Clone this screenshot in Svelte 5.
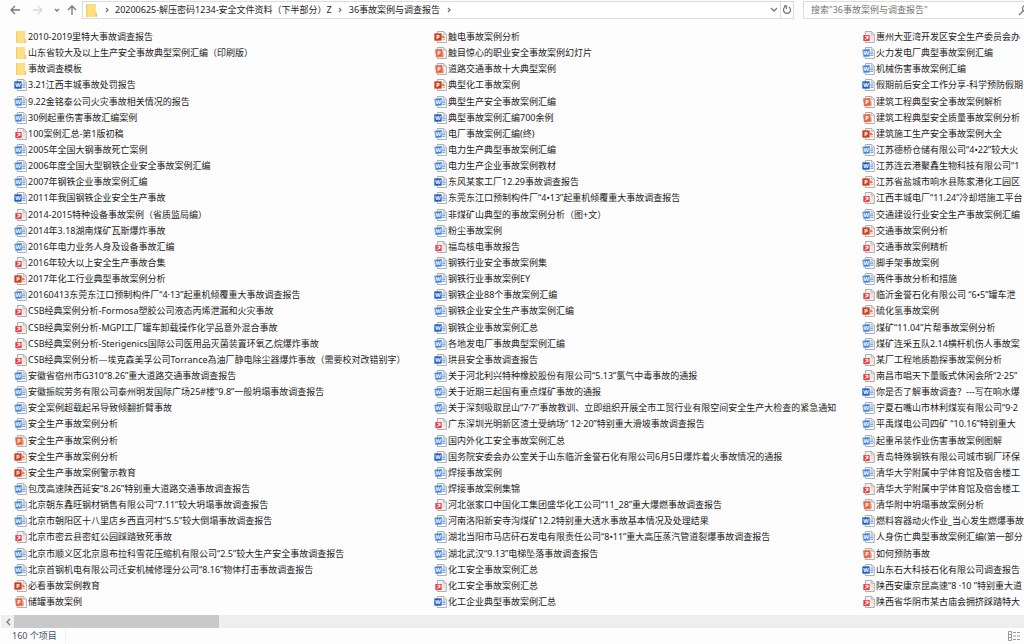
<script>
    let search = '';
    let selected = null;

    const path = ['20200625-解压密码1234-安全文件资料（下半部分）Z', '36事故案例与调查报告'];

    // [icono, nombre], de arriba a abajo y de columna en columna
    const files = [
        ['folder', '2010-2019里特大事故调查报告'],
        ['folder', '山东省较大及以上生产安全事故典型案例汇编（印刷版）'],
        ['folder', '事故调查模板'],
        ['docx', '3.21江西丰城事故处罚报告'],
        ['doc', '9.22金铭泰公司火灾事故相关情况的报告'],
        ['doc', '30例起重伤害事故汇编案例'],
        ['pdf', '100案例汇总-第1版初稿'],
        ['doc', '2005年全国大钢事故死亡案例'],
        ['doc', '2006年度全国大型钢铁企业安全事故案例汇编'],
        ['doc', '2007年钢铁企业事故案例汇编'],
        ['docx', '2011年我国钢铁企业安全生产事故'],
        ['pdf', '2014-2015特种设备事故案例（省质监局编）'],
        ['doc', '2014年3.18湖南煤矿瓦斯爆炸事故'],
        ['doc', '2016年电力业务人身及设备事故汇编'],
        ['pdf', '2016年较大以上安全生产事故合集'],
        ['pptx', '2017年化工行业典型事故案例分析'],
        ['doc', '20160413东莞东江口预制构件厂“4·13”起重机倾覆重大事故调查报告'],
        ['pdf', 'CSB经典案例分析-Formosa塑胶公司液态丙烯泄漏和火灾事故'],
        ['pdf', 'CSB经典案例分析-MGPI工厂罐车卸载操作化学品意外混合事故'],
        ['pdf', 'CSB经典案例分析-Sterigenics国际公司医用品灭菌装置环氧乙烷爆炸事故'],
        ['pdf', 'CSB经典案例分析—埃克森美孚公司Torrance為油厂静电除尘器爆炸事故（需要校对改错别字）'],
        ['doc', '安徽省宿州市G310“8.26”重大道路交通事故调查报告'],
        ['doc', '安徽振皖劳务有限公司泰州明发国际广场25#楼“9.8”一般坍塌事故调查报告'],
        ['doc', '安全案例超载起吊导致倾翻折臂事故'],
        ['doc', '安全生产事故案例分析'],
        ['ppt', '安全生产事故案例分析'],
        ['pptx', '安全生产事故案例分析'],
        ['pptx', '安全生产事故案例警示教育'],
        ['doc', '包茂高速陕西延安“8.26”特别重大道路交通事故调查报告'],
        ['doc', '北京朝东鑫旺钢材销售有限公司“7.11”较大坍塌事故调查报告'],
        ['doc', '北京市朝阳区十八里店乡西直河村“5.5”较大倒塌事故调查报告'],
        ['pdf', '北京市密云县密虹公园踩踏致死事故'],
        ['doc', '北京市顺义区北京恩布拉科雪花压缩机有限公司“2.5”较大生产安全事故调查报告'],
        ['doc', '北京首钢机电有限公司迁安机械修理分公司“8.16”物体打击事故调查报告'],
        ['pptx', '必看事故案例教育'],
        ['ppt', '储罐事故案例'],

        ['pptx', '触电事故案例分析'],
        ['ppt', '触目惊心的职业安全事故案例幻灯片'],
        ['ppt', '道路交通事故十大典型案例'],
        ['pptx', '典型化工事故案例'],
        ['doc', '典型生产安全事故案例汇编'],
        ['docx', '典型事故案例汇编700余例'],
        ['doc', '电厂事故案例汇编(终)'],
        ['doc', '电力生产典型事故案例汇编'],
        ['doc', '电力生产企业事故案例教材'],
        ['docx', '东风某家工厂12.29事故调查报告'],
        ['docx', '东莞东江口预制构件厂“4•13”起重机倾覆重大事故调查报告'],
        ['doc', '非煤矿山典型的事故案例分析（图+文）'],
        ['doc', '粉尘事故案例'],
        ['pdf', '福岛核电事故报告'],
        ['doc', '钢铁行业安全事故案例集'],
        ['doc', '钢铁行业事故案例EY'],
        ['docx', '钢铁企业88个事故案例汇编'],
        ['doc', '钢铁企业安全生产事故案例汇编'],
        ['docx', '钢铁企业事故案例汇总'],
        ['doc', '各地发电厂事故典型案例汇编'],
        ['docx', '珙县安全事故调查报告'],
        ['doc', '关于河北利兴特种橡胶股份有限公司“5.13”氯气中毒事故的通报'],
        ['doc', '关于近期三起国有重点煤矿事故的通报'],
        ['doc', '关于深刻吸取昆山“7·7”事故教训、立即组织开展全市工贸行业有限空间安全生产大检查的紧急通知'],
        ['pdf', '广东深圳光明新区渣土受纳场“ 12·20”特别重大滑坡事故调查报告'],
        ['doc', '国内外化工安全事故案例汇总'],
        ['docx', '国务院安委会办公室关于山东临沂金誉石化有限公司6月5日爆炸着火事故情况的通报'],
        ['doc', '焊接事故案例'],
        ['doc', '焊接事故案例集锦'],
        ['pdf', '河北张家口中国化工集团盛华化工公司“11_28”重大爆燃事故调查报告'],
        ['doc', '河南洛阳新安寺沟煤矿12.2特别重大透水事故基本情况及处理结果'],
        ['doc', '湖北当阳市马店矸石发电有限责任公司“8•11”重大高压蒸汽管道裂爆事故调查报告'],
        ['doc', '湖北武汉“9.13”电梯坠落事故调查报告'],
        ['doc', '化工安全事故案例汇总'],
        ['pdf', '化工安全事故案例汇总'],
        ['docx', '化工企业典型事故案例汇总'],

        ['pdf', '惠州大亚湾开发区安全生产委员会办'],
        ['doc', '火力发电厂典型事故案例汇编'],
        ['doc', '机械伤害事故案例汇编'],
        ['docx', '假期前后安全工作分享-科学预防假期'],
        ['ppt', '建筑工程典型安全事故案例解析'],
        ['ppt', '建筑工程典型安全质量事故案例分析'],
        ['pptx', '建筑施工生产安全事故案例大全'],
        ['doc', '江苏德桥仓储有限公司“4•22”较大火'],
        ['docx', '江苏连云港聚鑫生物科技有限公司“1'],
        ['pptx', '江苏省盐城市响水县陈家港化工园区'],
        ['pdf', '江西丰城电厂“11.24”冷却塔施工平台'],
        ['doc', '交通建设行业安全生产事故案例汇编'],
        ['pptx', '交通事故案例分析'],
        ['pdf', '交通事故案例精析'],
        ['doc', '脚手架事故案例'],
        ['doc', '两件事故分析和措施'],
        ['pdf', '临沂金誉石化有限公司 “6•5”罐车泄'],
        ['pptx', '硫化氢事故案例'],
        ['doc', '煤矿“11.04”片帮事故案例分析'],
        ['doc', '煤矿连采五队2.14横杆机伤人事故案'],
        ['pdf', '某厂工程地质勘探事故案例分析'],
        ['pdf', '南昌市唱天下量贩式休闲会所“2·25”'],
        ['docx', '你是否了解事故调查？---写在响水爆'],
        ['doc', '宁夏石嘴山市林利煤炭有限公司“9·2'],
        ['doc', '平禹煤电公司四矿 “10.16”特别重大'],
        ['doc', '起重吊装作业伤害事故案例图解'],
        ['pdf', '青岛特殊钢铁有限公司城市钢厂环保'],
        ['doc', '清华大学附属中学体育馆及宿舍楼工'],
        ['pdf', '清华大学附属中学体育馆及宿舍楼工'],
        ['ppt', '清华附中坍塌事故案例分析'],
        ['docx', '燃料容器动火作业_当心发生燃爆事故'],
        ['doc', '人身伤亡典型事故案例汇编(第一部分'],
        ['ppt', '如何预防事故'],
        ['docx', '山东石大科技石化有限公司调查报告'],
        ['pdf', '陕西安康京昆高速“8 ·10 ”特别重大道'],
        ['pdf', '陕西省华阴市某古庙会拥挤踩踏特大']
    ];
</script>

{#snippet icon(type)}
    <svg class="icon" viewBox="0 0 39 36" aria-hidden="true">
        {#if type === 'folder'}
            <path d="M6 0 H32 V24 H36 V36 H6 Z" fill="#eec25a" />
            <path d="M6 0 H32 V36 H6 Z" fill="#fddf83" />
            <path d="M6 0 H9 V36 H6 Z" fill="#f3cb62" />
        {:else}
            <path d="M10 1.5 H29 L37 9 V34.5 H10 Z" fill={type === 'pdf' ? '#f1f1f1' : '#fff'} stroke="#a0a0a0" stroke-width="2.5" />
            <path d="M28 2 V10 H36" fill="#e2e2e2" stroke="#a8a8a8" stroke-width="2" />
            {#if type === 'docx'}
                <path d="M25 15 H34 M25 20 H34 M25 25 H34" stroke="#5b9bea" stroke-width="3" />
                <rect x="1" y="7" width="22" height="22" fill="#1f5fc6" />
                <text x="12" y="24" fill="#fff">W</text>
            {:else if type === 'doc'}
                <path d="M25 15 H34 M25 20 H34 M25 25 H34" stroke="#5b9bea" stroke-width="3" />
                <path d="M2 9 L23 6 V28 L5 29 Z" fill="#4380d6" stroke="#7aa9ea" stroke-width="2" />
                <text x="13" y="24" fill="#fff">W</text>
            {:else if type === 'pptx'}
                <path d="M25 14 A6 6 0 0 1 31 21 H25 Z M25 26 H33" fill="#ef7650" stroke="#ef7650" stroke-width="2" />
                <rect x="1" y="7" width="22" height="22" fill="#cb4220" />
                <text x="12" y="24" fill="#fff">P</text>
            {:else if type === 'ppt'}
                <path d="M29 15 V29" stroke="#f1b49f" stroke-width="3" />
                <path d="M4 8 L24 6 L27 29 L7 30 Z" fill="#e4643f" stroke="#ec8467" stroke-width="2" />
                <text x="15" y="24" fill="#fff">P</text>
            {:else}
                <path d="M26 13 H33 M26 18 H33 M26 23 H33" stroke="#d2d2d2" stroke-width="2" />
                <rect x="4" y="12" width="19" height="18" fill="#ea4248" />
                <path d="M10 16 H18 V22 H13 M9 27 L17 18" fill="none" stroke="#fff" stroke-width="3" />
            {/if}
        {/if}
    </svg>
{/snippet}

<div class="window">
    <header>
        <nav class="arrows">
            <button aria-label="返回">
                <svg width="12" height="12" viewBox="0 0 12 12"><path d="M11 6 H2 M6 2 L2 6 L6 10" /></svg>
            </button>
            <button class="off" aria-label="前进" disabled>
                <svg width="12" height="12" viewBox="0 0 12 12"><path d="M1 6 H10 M6 2 L10 6 L6 10" /></svg>
            </button>
            <button class="recent" aria-label="最近浏览的位置">
                <svg width="6" height="12" viewBox="0 0 6 12"><path d="M1 5 L3 7 L5 5" /></svg>
            </button>
            <button aria-label="上移">
                <svg width="12" height="12" viewBox="0 0 12 12"><path d="M6 11 V2 M2 6 L6 2 L10 6" /></svg>
            </button>
        </nav>

        <div class="address">
            {@render icon('folder')}
            {#each path as part}
                <span class="sep"><svg width="4" height="8" viewBox="0 0 4 8"><path d="M1 2 L3 4 L1 6" /></svg></span>
                <button class="crumb">{part}</button>
            {/each}
            <span class="sep"><svg width="4" height="8" viewBox="0 0 4 8"><path d="M1 2 L3 4 L1 6" /></svg></span>
            <button class="history" aria-label="以前的位置">
                <svg width="8" height="8" viewBox="0 0 8 8"><path d="M1 2 L4 5 L7 2" /></svg>
            </button>
            <button class="refresh" aria-label="刷新">
                <svg width="10" height="10" viewBox="0 0 10 10"><path d="M7 2 A3.5 3.5 0 1 1 3 2 M2 1 H4.500 V4" /></svg>
            </button>
        </div>

        <label class="search">
            <input type="text" aria-label="搜索" placeholder="搜索&quot;36事故案例与调查报告&quot;" bind:value={search} />
            <svg width="12" height="12" viewBox="0 0 12 12"><circle cx="7.500" cy="4.500" r="3" /><path d="M5 7 L1 11" /></svg>
        </label>
    </header>

    <ul>
        {#each files as [type, name], i}
            <li>
                <a href="#file" class:selected={selected === i} on:click|preventDefault={() => (selected = i)}>
                    {@render icon(type)}<span>{name}</span>
                </a>
            </li>
        {/each}
    </ul>

    <div class="scroll">
        <button aria-label="向左滚动">
            <svg width="6" height="8" viewBox="0 0 6 8"><path d="M5 1 L2 4 L5 7" /></svg>
        </button>
        <div class="thumb"></div>
    </div>

    <footer>
        <span class="count">160 个项目</span>
        <button aria-label="详细信息">
            <svg width="12" height="10" viewBox="0 0 12 10">
                <path d="M0.500 0.500 H3.500 V9.500 H0.500 Z M0.500 3.500 H3.500 M0.500 6.500 H3.500" />
                <path d="M5 1.500 H8 M9 1.500 H12 M5 5 H8 M9 5 H12 M5 8.500 H8 M9 8.500 H12" />
            </svg>
        </button>
    </footer>
</div>

<style>
    :global(body) {
        background: #fdfdfd;
    }

    .window {
        display: flex;
        flex-direction: column;
        min-height: 100vh;
        overflow: hidden;
        font-family: "Noto Sans", "Noto Sans CJK SC", sans-serif;
        font-size: 9px;
        line-height: 14px;
        color: #1c1c1c;
    }

    button {
        display: flex;
        align-items: center;
        justify-content: center;
        padding: 0;
        border: 0;
        background: none;
        font: inherit;
        color: inherit;
    }

    svg {
        flex: none;
        fill: none;
        stroke: #777;
        stroke-width: 1.3;
    }

    header {
        display: flex;
        align-items: center;
        padding: 1px 0 10px 9px;
    }

    .arrows {
        display: flex;
        align-items: center;
        gap: 11px;
        width: 73px;
    }

    .arrows .recent {
        margin: 0 -5px 0 -1px;
    }

    .off svg {
        stroke: #d8d8d8;
    }

    .address,
    .search {
        display: flex;
        align-items: center;
        box-sizing: border-box;
        height: 18px;
        border: 1px solid #dcdcdc;
        background: #fff;
    }

    .address {
        flex: 1;
        min-width: 0;
        padding-left: 1px;
    }

    .crumb {
        white-space: nowrap;
    }

    .sep {
        display: flex;
        justify-content: center;
        width: 17px;
    }

    .history {
        width: 12px;
        height: 16px;
        margin-left: auto;
    }

    .refresh {
        width: 13px;
        height: 16px;
        border-left: 1px solid #dcdcdc;
    }

    .search {
        width: 227px;
        margin: 0 -6px 0 9px;
        border-right: 0;
        padding-left: 7px;
    }

    .search input {
        flex: 1;
        min-width: 0;
        padding: 0;
        border: 0;
        outline: 0;
        background: none;
        font: inherit;
    }

    .search input::placeholder {
        color: #757575;
        opacity: 1;
    }

    /* 36 filas por columna, como la vista de lista */
    ul {
        flex: 1;
        display: grid;
        grid-template-rows: repeat(36, minmax(16px, 1fr));
        grid-template-columns: 420px 428px minmax(0, 1fr);
        grid-auto-flow: column;
        margin: 0;
        padding: 0 0 5px 14px;
        list-style: none;
    }

    li {
        display: flex;
        min-width: 0;
    }

    a {
        display: flex;
        align-items: center;
        gap: 1px;
        color: inherit;
        text-decoration: none;
        white-space: nowrap;
    }

    a.selected {
        background: #cce8ff;
    }

    .icon {
        width: 13px;
        height: 12px;
        stroke: none;
    }

    .icon text {
        font-size: 17px;
        font-weight: bold;
        text-anchor: middle;
    }

    .address .icon {
        width: 14px;
        height: 13px;
    }

    .scroll {
        display: flex;
        height: 13px;
        margin-left: 1px;
        background: #eee;
    }

    .scroll button {
        width: 13px;
    }

    .thumb {
        width: 20%;
        background: #c9c9c9;
    }

    footer {
        display: flex;
        align-items: center;
        justify-content: space-between;
        height: 16px;
        padding: 0 4px 0 12px;
        color: #44546a;
    }

    .count {
        padding-right: 8px;
        border-right: 1px solid #f0f0f0;
    }

    footer svg {
        stroke: #999;
        stroke-width: 1;
    }
</style>
